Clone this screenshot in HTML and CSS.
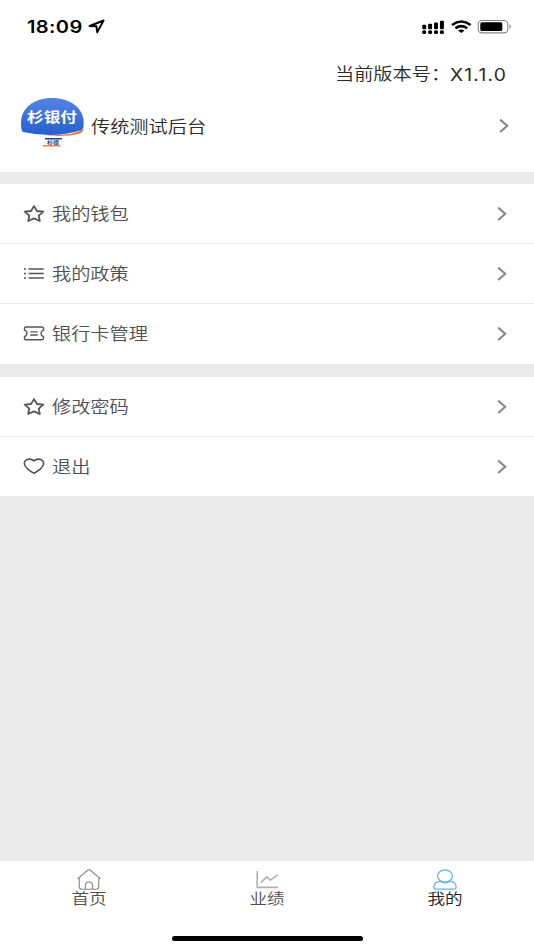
FILE: index.html
```html
<!DOCTYPE html>
<html lang="zh-CN">
<head>
<meta charset="UTF-8">
<meta name="viewport" content="width=device-width, initial-scale=1.0">
<title>我的</title>
<link rel="stylesheet" href="styles.css">
</head>
<body>
<svg class="defs" width="0" height="0">
    <symbol id="arrow" viewBox="0 0 10 14"><path d="M1.2 .6L8.2 6.8L1.2 13" fill="none" stroke="#888" stroke-width="2.1"/></symbol>
    <symbol id="star" viewBox="0 0 22 18"><path d="M11 1.1L14 6L20.3 6.6L15.7 10.6L16.8 16L11 13.4L5.2 16L6.3 10.6L1.7 6.6L8 6Z" fill="none" stroke="#555559" stroke-width="1.8" stroke-linejoin="round"/></symbol>
</svg>
<div class="page">
    <div class="status">
        <span class="time">18:09</span>
        <svg class="location" width="18" height="15" viewBox="0 0 18 15"><path d="M1.6 7L15.6 1.5L9.2 13.2L8.4 7.3Z" fill="none" stroke="#000" stroke-width="1.9" stroke-linejoin="round"/></svg>
        <svg class="signal" width="90" height="16" viewBox="0 0 90 16">
            <g fill="#000">
                <rect x="0.2" y="5.8" width="4" height="4.4" rx="1"/>
                <rect x="6.1" y="4.8" width="4" height="5.4" rx="1"/>
                <rect x="12" y="3.5" width="4" height="6.7" rx="1"/>
                <rect x="17.9" y="1.8" width="4" height="8.4" rx="1"/>
                <rect x="0.2" y="11.2" width="4" height="3.8" rx="1.5"/>
                <rect x="6.1" y="11.2" width="4" height="3.8" rx="1.5"/>
                <rect x="12" y="11.2" width="4" height="3.8" rx="1.5"/>
                <rect x="17.9" y="11.2" width="4" height="3.8" rx="1.5"/>
                <path d="M36.1 11.4Q39.3 9.4 42.5 11.4L39.3 14Z"/>
            </g>
            <path d="M30 6Q39.3 -.9 48.6 6M33.4 9.3Q39.3 4.9 45.2 9.3" fill="none" stroke="#000" stroke-width="2.5"/>
            <rect x="56.2" y="1.5" width="29.6" height="12.4" rx="3.6" fill="none" stroke="#888" stroke-width="1.1"/>
            <rect x="58.3" y="3.3" width="22" height="8.8" rx="1.6" fill="#000"/>
            <path d="M87.5 5.6Q90.2 7.7 87.5 10Z" fill="#777"/>
        </svg>
    </div>

    <div class="header">
        <div class="version"><span class="text">当前版本号：</span><span class="text num">X1.1.0</span></div>
        <div class="user">
            <svg class="logo" width="64" height="52" viewBox="0 0 64 52">
                <defs>
                    <linearGradient id="dome" x1="0" y1="0" x2="0" y2="1">
                        <stop offset="0" stop-color="#5583e4"/>
                        <stop offset="1" stop-color="#2560cf"/>
                    </linearGradient>
                </defs>
                <path d="M23 37.8Q50 39.8 63.5 32Q63 35.5 58 37Q43 40.8 23 37.8Z" fill="#f0713a"/>
                <path d="M1 26C1 11 14 1 32 1S63.7 11 63.7 26C63.7 30 63 32 61.5 33Q35 42 3 35Q1 34 1 26Z" fill="url(#dome)"/>
                <text class="logo-name" x="32" y="25.2" textLength="50" lengthAdjust="spacingAndGlyphs">杉银付</text>
                <rect x="25" y="41" width="17" height="1.5" fill="#26477e"/>
                <text class="logo-sub" x="33" y="47.4" textLength="12" lengthAdjust="spacingAndGlyphs">杉德</text>
                <rect x="23" y="48" width="17" height="1.5" fill="#e9804c"/>
            </svg>
            <span class="text">传统测试后台</span>
            <svg class="arrow" width="10" height="14"><use href="#arrow"/></svg>
        </div>
    </div>

    <div class="menu">
        <div class="item">
            <svg width="22" height="18"><use href="#star"/></svg>
            <span class="text">我的钱包</span>
            <svg class="arrow" width="10" height="14"><use href="#arrow"/></svg>
        </div>
        <div class="item">
            <svg width="22" height="18" viewBox="0 0 22 18"><path d="M1 4h2M1 8.5h2M1 13h2M5.5 4h15.3M5.5 8.5h15.3M5.5 13h15.3" stroke="#555559" stroke-width="1.7"/></svg>
            <span class="text">我的政策</span>
            <svg class="arrow" width="10" height="14"><use href="#arrow"/></svg>
        </div>
        <div class="item">
            <svg width="22" height="18" viewBox="0 0 22 18"><path d="M3.2 2H18.8Q20.5 2 20.5 3.5V5.2Q18 6.2 18 8.4T20.5 11.7V13.3Q20.5 14.8 18.8 14.8H3.2Q1.5 14.8 1.5 13.3V11.7Q4 10.7 4 8.4T1.5 5.2V3.5Q1.5 2 3.2 2ZM7.3 6.9H14.7M7.3 10H14.7" fill="none" stroke="#555559" stroke-width="1.4"/></svg>
            <span class="text">银行卡管理</span>
            <svg class="arrow" width="10" height="14"><use href="#arrow"/></svg>
        </div>
    </div>

    <div class="menu">
        <div class="item">
            <svg width="22" height="18"><use href="#star"/></svg>
            <span class="text">修改密码</span>
            <svg class="arrow" width="10" height="14"><use href="#arrow"/></svg>
        </div>
        <div class="item">
            <svg width="22" height="18" viewBox="0 0 22 18"><path d="M11 2.9C8.5 .4 3.7 .6 1.9 3.4C.3 6.6 2.2 8.9 4.5 10.8C6.5 12.4 8.7 13.9 11 15.4C13.3 13.9 15.5 12.4 17.5 10.8C19.8 8.9 21.7 6.6 20.1 3.4C18.3 .6 13.5 .4 11 2.9Z" fill="none" stroke="#555559" stroke-width="1.6"/></svg>
            <span class="text">退出</span>
            <svg class="arrow" width="10" height="14"><use href="#arrow"/></svg>
        </div>
    </div>

    <div class="tabbar">
        <div class="tab">
            <svg width="26" height="22" viewBox="0 0 26 22"><path d="M1.5 9.8L11.7 1.3Q13 .4 14.3 1.3L24.5 9.8M3.2 8.6V17.5Q3.2 20.2 5.8 20.2H20.2Q22.8 20.2 22.8 17.5V8.6M9.4 20.2V16.2Q9.6 13 13 13T16.6 16.2V20.2" fill="none" stroke="#858585" stroke-width="1.1"/></svg>
            <span class="text">首页</span>
        </div>
        <div class="tab">
            <svg width="26" height="22" viewBox="0 0 26 22"><path d="M3.2 2V18.4H24M6.7 13.7L12.8 7.9L16.2 11.3L23.8 5.7" fill="none" stroke="#b0b0b0" stroke-width="1.6"/></svg>
            <span class="text">业绩</span>
        </div>
        <div class="tab active">
            <svg width="26" height="22" viewBox="0 0 26 22"><path d="M8.2 12.3C3.7 12.5 1.9 15.1 1.9 18.1Q1.9 20.2 4 20.2H22Q24.1 20.2 24.1 18.1C24.1 15.1 22.3 12.5 17.8 12.3Q13 15.5 8.2 12.3Z" fill="none" stroke="#5cb3e8" stroke-width="1.2"/><ellipse cx="13" cy="7" rx="7.5" ry="6.1" fill="#fff" stroke="#5cb3e8" stroke-width="1.2"/></svg>
            <span class="text">我的</span>
        </div>
        <div class="home-line"></div>
    </div>
</div>
</body>
</html>
```
FILE: styles.css
```css
body {
    margin: 0;
    background-color: #ebebeb;
    font-family: Inter, "Noto Sans CJK SC", sans-serif;
    color: #2b2b2b;
}

svg {
    display: block;
    flex-shrink: 0;
}

.defs {
    position: absolute;
}

.page {
    display: flex;
    flex-direction: column;
    height: 950px;
    overflow: hidden;
}

/* wide, slightly flattened lettering */
.text {
    display: inline-block;
    font-family: "Liberation Sans", "Noto Sans CJK SC", sans-serif;
    font-size: 19.2px;
    font-weight: 350;
    line-height: 24px;
    white-space: nowrap;
    transform: scaleY(0.87);
}

.status {
    display: flex;
    align-items: center;
    height: 53px;
    padding: 0 22px 0 27px;
    background-color: #fff;
}

.time {
    width: 56px;
    font-size: 20px;
    font-weight: 600;
    line-height: 24px;
    letter-spacing: 0.4px;
    color: #000;
    transform: scaleY(0.86);
}

.location {
    margin-left: 5px;
}

.signal {
    margin-left: auto;
}

.header {
    height: 119px;
    background-color: #fff;
}

.version {
    display: flex;
    justify-content: flex-end;
    height: 24px;
    padding: 10px 27px 0 0;
}

.version .num {
    font-family: Inter, sans-serif;
    font-weight: 400;
    letter-spacing: 1.2px;
}

.user {
    display: flex;
    align-items: center;
    height: 52px;
    margin-top: 10px;
    padding: 0 25px 0 20px;
}

.user .text {
    margin: 9px 0 0 7px;
}

.user .arrow {
    margin-top: 6px;
}

.logo-name {
    font-size: 13.5px;
    font-weight: 700;
    fill: #fff;
    text-anchor: middle;
}

.logo-sub {
    font-size: 5px;
    font-weight: 700;
    fill: #26477e;
    text-anchor: middle;
}

.arrow {
    margin-left: auto;
}

.menu {
    margin-top: 12px;
    background-color: #fff;
}

.menu + .menu {
    margin-top: 12.5px;
}

.item {
    display: flex;
    align-items: center;
    box-sizing: border-box;
    height: 60.2px;
    padding: 0 27px 0 23px;
    border-bottom: 1px solid #e9e9e9;
    color: #505054;
}

.item .text {
    margin: 3px 0 0 7px;
}

.tabbar {
    display: grid;
    grid-template-columns: repeat(3, 1fr);
    grid-template-rows: 75px 5px;
    height: 89px;
    margin-top: auto;
    background-color: #fff;
}

.tab {
    display: flex;
    flex-direction: column;
    align-items: center;
    padding-top: 8px;
    color: #505050;
}

.tab .text {
    margin-top: -4px;
    font-size: 17.6px;
}

.tabbar .active {
    color: #222;
}

.home-line {
    grid-column: 1 / 4;
    justify-self: center;
    width: 191px;
    height: 5px;
    border-radius: 3px;
    background-color: #000;
}
```
